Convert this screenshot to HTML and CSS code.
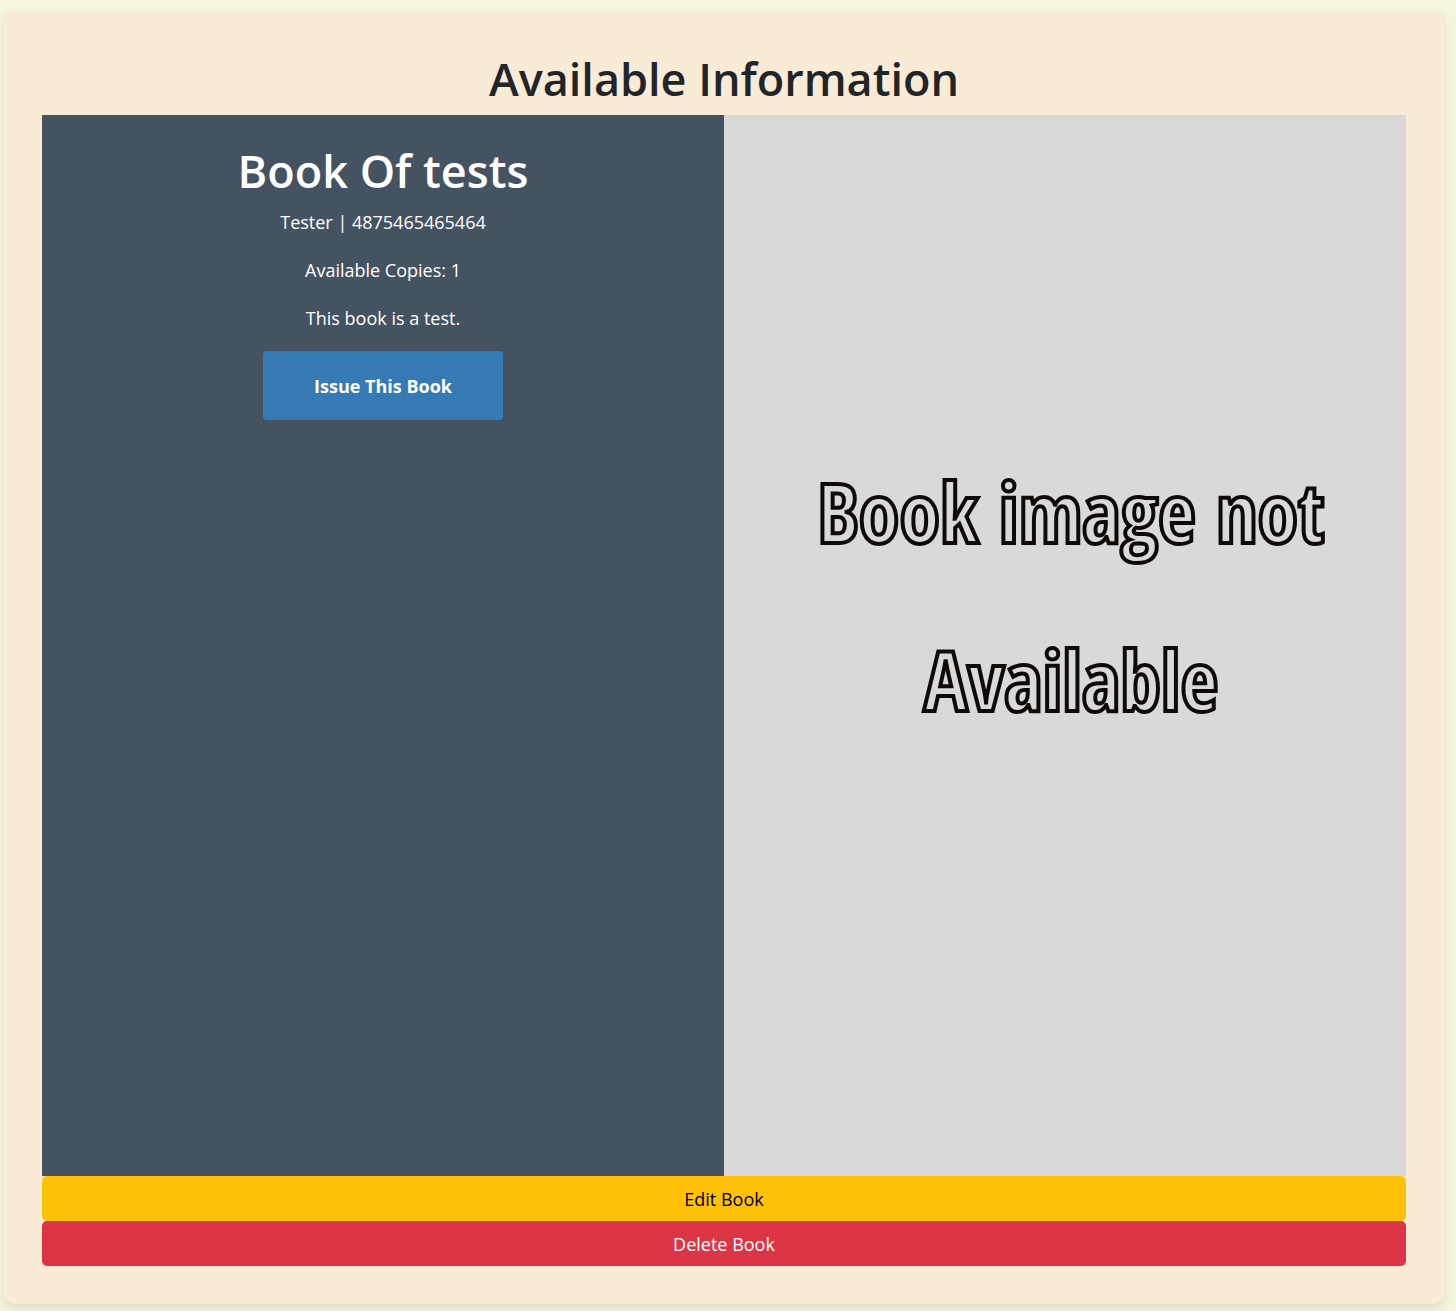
FILE: index.html
```html
<!DOCTYPE html>
<html lang="en">
<head>
<meta charset="utf-8">
<meta name="viewport" content="width=device-width, initial-scale=1">
<title>Available Information</title>
<link rel="stylesheet" href="styles.css">
</head>
<body>
<main class="card">
  <h1 class="title">Available Information</h1>
  <div class="book">
    <section class="details">
      <h2 class="title">Book Of tests</h2>
      <p>Tester | 4875465465464</p>
      <p>Available Copies: 1</p>
      <p>This book is a test.</p>
      <button class="issue" type="button">Issue This Book</button>
    </section>
    <div class="cover">
      <p class="cover-text">Book image not<br>Available</p>
    </div>
  </div>
  <button class="btn btn-edit" type="button">Edit Book</button>
  <button class="btn btn-delete" type="button">Delete Book</button>
</main>
</body>
</html>
```
FILE: styles.css
```css
* {
  box-sizing: border-box;
}

body {
  margin: 0;
  padding: 12px 12px 12px 4px;
  background: #f5f5dc;
  color: #212529;
  font-family: "Segoe UI", "Open Sans", "Noto Sans", sans-serif;
  font-size: 18px;
  line-height: 31px;
}

.card {
  padding: 38px;
  border-radius: 10px;
  background: #faebd7;
  box-shadow: 0 4px 10px rgba(0, 0, 0, 0.1);
}

.title {
  margin: 0 0 8px;
  font-size: 45px;
  font-weight: 600;
  line-height: 57px;
  text-align: center;
}

.book {
  display: grid;
  grid-template-columns: 1fr 1fr;
}

.details {
  display: flex;
  flex-direction: column;
  align-items: center;
  padding: 27px 16px;
  background: #455261;
  color: #fff;
  text-align: center;
}

.details p {
  margin: 0 0 17px;
}

.issue {
  width: 240px;
  height: 69px;
  padding: 2px 0 0;
  border: 0;
  border-radius: 4px;
  background: #357ab5;
  color: #fff;
  font: inherit;
  font-weight: 700;
}

.cover {
  display: flex;
  justify-content: center;
  padding: 312px 0 0 12px;
  aspect-ratio: 682 / 1061;
  background: #d9d9d9;
}

.cover-text {
  margin: 0;
  color: #d9d9d9;
  font-family: "Liberation Sans Narrow", "Open Sans Condensed", "Roboto Condensed", "DejaVu Sans Condensed", sans-serif;
  font-size: 82px;
  font-weight: 700;
  line-height: 168px;
  text-align: center;
  white-space: nowrap;
  -webkit-text-stroke: 4px #0e0a08;
}

.btn {
  display: block;
  width: 100%;
  height: 45px;
  padding: 2px 0 0;
  border: 0;
  border-radius: 5px;
  font: inherit;
}

.btn-edit {
  background: #ffc107;
  color: #000;
}

.btn-delete {
  background: #dc3545;
  color: #fff;
}
```
